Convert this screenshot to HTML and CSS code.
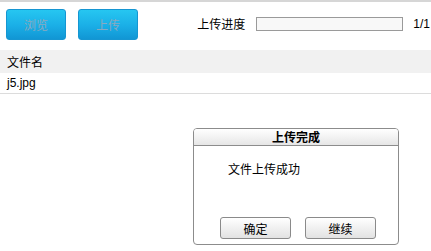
FILE: index.html
```html
<!DOCTYPE html>
<html lang="zh">
<head>
<meta charset="utf-8">
<link rel="stylesheet" href="styles.css">
</head>
<body>
<div class="toolbar">
  <button class="btn-blue">浏览</button>
  <button class="btn-blue">上传</button>
  <div class="progress-wrap">
    <span class="progress-label">上传进度</span>
    <div class="progress-bar"></div>
    <span class="progress-count">1/1</span>
  </div>
</div>
<div class="file-table">
  <div class="file-head">文件名</div>
  <div class="file-row">j5.jpg</div>
</div>
<div class="dialog">
  <div class="dialog-title">上传完成</div>
  <div class="dialog-body">文件上传成功</div>
  <div class="dialog-actions">
    <button class="btn-gray">确定</button>
    <button class="btn-gray">继续</button>
  </div>
</div>
</body>
</html>
```
FILE: styles.css
```css
* { box-sizing: border-box; }
body {
  margin: 0;
  font-family: "Noto Sans CJK SC", "Liberation Sans", sans-serif;
  font-size: 12px;
  color: #000;
  background: #fff;
  border-top: 2px solid #d6d6d6;
  width: 431px;
  height: 251px;
  position: relative;
  overflow: hidden;
}
.toolbar {
  display: flex;
  align-items: center;
  height: 46px;
  padding: 0 0 2px 6px;
  gap: 12px;
}
.btn-blue {
  width: 60px;
  height: 31px;
  border: 1px solid #1596d2;
  border-radius: 3px;
  background: linear-gradient(#26c6f1, #1aaee6 55%, #1196d4);
  color: #8aa9c0;
  font-family: "Noto Sans CJK SC", sans-serif;
  font-size: 12px;
  padding: 0;
}
.progress-wrap {
  margin-left: auto;
  display: flex;
  align-items: center;
  padding-right: 1px;
}
.progress-label {
  margin-right: 11px;
  line-height: 14px;
}
.progress-bar {
  width: 147px;
  height: 14px;
  border: 1px solid #9a9a9a;
  background: #f8f8f8;
  margin-right: 10px;
}
.progress-count {
  font-family: "Liberation Sans", sans-serif;
}
.file-head {
  margin-top: 2px;
  height: 23px;
  background: #f1f1f1;
  padding-left: 7px;
  line-height: 23px;
}
.file-row {
  height: 21px;
  padding-left: 7px;
  line-height: 20px;
  border-bottom: 1px solid #dcdcdc;
  font-family: "Liberation Sans", sans-serif;
}
.dialog {
  position: absolute;
  left: 193px;
  top: 126px;
  width: 206px;
  height: 117px;
  border: 1px solid #8c8c8c;
  border-radius: 4px;
  background: #fff;
  display: flex;
  flex-direction: column;
}
.dialog-title {
  height: 17px;
  border-bottom: 1px solid #8c8c8c;
  border-radius: 3px 3px 0 0;
  background: linear-gradient(#ffffff, #e6e6e6);
  text-align: center;
  font-weight: bold;
  line-height: 16px;
}
.dialog-body {
  padding: 15px 0 0 34px;
  line-height: 16px;
  flex: 1;
}
.dialog-actions {
  display: flex;
  gap: 14px;
  padding: 0 0 5px 26px;
}
.btn-gray {
  width: 71px;
  height: 22px;
  border: 1px solid #8a8a8a;
  border-radius: 3px;
  background: linear-gradient(#ffffff, #e2e2e2);
  font-family: "Noto Sans CJK SC", sans-serif;
  font-size: 12px;
  color: #000;
  padding: 0;
}
```
